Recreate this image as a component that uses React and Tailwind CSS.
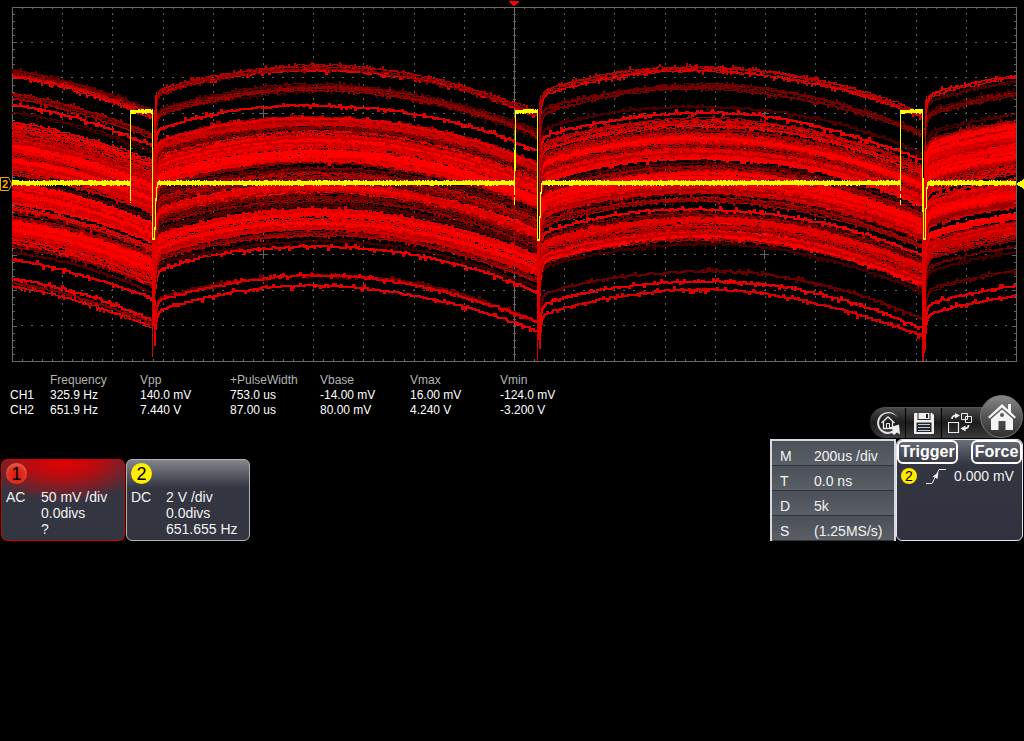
import React from 'react';

// small seeded generator so the persistence trace is the same on every render
function createRandom(seed) {
  let s = seed;
  return () => {
    s = (s * 1664525 + 1013904223) % 4294967296;
    return s / 4294967296;
  };
}

// Each sweep segment: x range, x of the arc's peak, and bands [top, bottom, brightness] at the peak
const SEGMENTS = [
  {
    from: 12, to: 152, peak: -70,
    bands: [
      [63, 66, 110], [67, 69, 190], [70, 71, 235], [87, 92, 125], [99, 99, 235], [105, 106, 75],
      [115, 124, 195], [125, 134, 195], [128, 133, 150], [136, 147, 240], [148, 151, 190], [152, 163, 250], [163, 167, 175],
      [172, 173, 90], [177, 191, 245], [186, 196, 220], [200, 203, 220], [204, 206, 110], [209, 212, 150],
      [214, 219, 245], [219, 221, 230], [222, 228, 225], [228, 237, 195], [238, 240, 130], [246, 246, 80], [253, 253, 225],
      [273, 273, 225], [276, 277, 140], [280, 281, 225],
    ],
  },
  {
    from: 154, to: 537, peak: 315,
    bands: [
      [65, 66, 180], [68, 69, 130], [70, 70, 225], [84, 86, 95], [87, 91, 130], [105, 105, 230],
      [117, 125, 205], [126, 129, 130], [131, 136, 200], [136, 145, 250], [146, 151, 180], [151, 160, 250],
      [161, 163, 140], [167, 171, 110], [173, 181, 170], [184, 192, 220], [194, 197, 120], [199, 200, 150],
      [203, 206, 85], [210, 216, 225], [218, 221, 220], [222, 229, 210], [231, 235, 140], [241, 241, 70],
      [246, 246, 230], [275, 275, 95], [276, 276, 220], [286, 286, 225],
    ],
  },
  {
    from: 539, to: 922, peak: 698,
    bands: [
      [66, 68, 190], [70, 71, 225], [84, 86, 115], [88, 89, 125], [106, 106, 75], [113, 113, 230],
      [118, 126, 190], [129, 135, 195], [136, 142, 250], [143, 149, 180], [150, 158, 250], [162, 163, 85],
      [165, 170, 120], [172, 178, 235], [179, 184, 220], [186, 192, 210], [193, 194, 80], [197, 201, 130],
      [209, 209, 235], [212, 216, 135], [218, 223, 235], [224, 231, 175], [232, 237, 225], [237, 239, 175],
      [244, 244, 70], [271, 271, 110], [281, 281, 225], [290, 290, 225],
    ],
  },
  {
    from: 924, to: 1016, peak: 1085,
    bands: [
      [70, 72, 225], [76, 77, 80], [86, 91, 120], [108, 109, 75], [115, 120, 190], [119, 129, 235],
      [128, 143, 245], [142, 156, 230], [154, 168, 190], [173, 184, 175], [179, 189, 240], [188, 201, 210],
      [209, 213, 235], [216, 219, 150], [219, 228, 225], [229, 235, 190], [241, 242, 120], [248, 248, 70],
      [265, 266, 105], [281, 281, 225], [291, 291, 225],
    ],
  },
];

const arc = (x, peak) => (x - peak) * (x - peak) * 0.00095;

function buildSweeps() {
  const rand = createRandom(7);
  const sweeps = [];
  SEGMENTS.forEach((seg) => {
    seg.bands.forEach(([top, bottom, level]) => {
      const single = bottom === top;
      const wide = bottom - top > 3;
      for (let base = top; base <= bottom; base += 1) {
        const shade = Math.max(60, Math.min(255, Math.round(level + (rand() - 0.55) * (wide ? 110 : 16))));
        const phase = rand() * 6;
        let x = seg.from;
        let d = '';
        while (x < seg.to) {
          // recovery right after the edge, then the slow arc with a little drift
          const settle = seg.from > 12 ? 30 * Math.exp(-(x - seg.from) / 1.4) + 4 * Math.exp(-(x - seg.from) / 5) : 0;
          const drift = Math.sin(x / 40 + phase) * 0.7;
          const y = Math.round(base + arc(x, seg.peak) + settle + drift + (rand() - 0.5) * 1.6);
          const run = x < seg.from + 8 ? 1 : Math.min(1 + Math.floor(rand() * 4), seg.to - x);
          d += d ? `V${y}` : `M${x} ${y}`;
          // noise spike, up or down
          if (run > 1 && rand() < 0.34) {
            const size = (rand() < 0.5 ? -1 : 1) * (rand() < 0.15 ? 3 : 2);
            d += `v${size}h1v${-size}`;
          }
          d += `H${x + run}`;
          x += run;
        }
        sweeps.push({ d, shade, order: rand() + shade / 500, width: single || (wide && level > 200) ? 2 : 1 });
      }
    });
  });
  return sweeps.sort((a, b) => a.order - b.order);
}

function buildBaseline() {
  const rand = createRandom(21);
  let d = '';
  [[12, 130], [158, 514], [542, 900], [928, 1016]].forEach(([from, to]) => {
    for (let x = from; x < to; x++) {
      const top = rand() < 0.4 ? 180 : 181;
      const bottom = rand() < 0.3 ? 186 : 185;
      d += `M${x} ${top}h1V${bottom}h-1z`;
    }
  });
  [[130, 153], [515, 538], [900, 923]].forEach(([from, to]) => {
    for (let x = from; x < to; x++) {
      d += `M${x} ${x < from + 8 || rand() < 0.2 ? 110 : 109}h1V${x < from + 4 || rand() < 0.2 ? 114 : 113}h-1z`;
    }
  });
  return d;
}

function buildGrid() {
  let d = '';
  for (let c = 1; c < 20; c++) {
    if (c === 10) continue;
    const x = Math.round(12 + c * 50.2);
    for (let r = 1; r < 50; r++) d += `M${x} ${Math.round(7 + r * 7.08) - 1}h1v${r % 5 === 0 ? 1 : 2}h-1z`;
  }
  for (let r = 1; r < 10; r++) {
    const y = Math.floor(7 + r * 35.4);
    for (let c = 1; c < 100; c++) d += `M${Math.round(12 + c * 10.04) - 1} ${y}h2v1h-2z`;
  }
  for (let c = 1; c < 100; c++) {
    const x = Math.round(12 + c * 10.04);
    d += `M${x} 8h1v1h-1zM${x} 359h1v2h-1z`;
  }
  for (let r = 1; r < 50; r++) {
    const y = Math.round(7 + r * 7.08);
    const len = r % 5 === 0 ? 4 : 2;
    d += `M13 ${y}h${len}v1h-${len}zM${1016 - len} ${y}h${len}v1h-${len}zM513 ${y}h3v1h-3z`;
  }
  [263, 764].forEach((x) => {
    [113, 254].forEach((y) => {
      d += `M${x - 4} ${y}h9v1h-9zM${x} ${y - 4}h1v9h-1z`;
    });
  });
  return d;
}

const SWEEPS = buildSweeps();
const BASELINE = buildBaseline();
const GRID = buildGrid();

const MEASUREMENTS = {
  columns: ['Frequency', 'Vpp', '+PulseWidth', 'Vbase', 'Vmax', 'Vmin'],
  rows: [
    { name: 'CH1', values: ['325.9 Hz', '140.0 mV', '753.0 us', '-14.00 mV', '16.00 mV', '-124.0 mV'] },
    { name: 'CH2', values: ['651.9 Hz', '7.440 V', '87.00 us', '80.00 mV', '4.240 V', '-3.200 V'] },
  ],
};

const TIMEBASE = [
  ['M', '200us /div'],
  ['T', '0.0 ns'],
  ['D', '5k'],
  ['S', '(1.25MS/s)'],
];

function Waveform() {
  return (
    <svg viewBox="0 0 1024 366" className="block w-full h-auto" shapeRendering="crispEdges" role="img" aria-label="Oscilloscope waveform">
      <path d={GRID} fill="#626262" />
      <path d="M12 7h1005v355h-1005zM13 8v353h1003v-353z" fill="#6a6a6a" fillRule="evenodd" />
      <rect x="514" y="7" width="1" height="354" fill="#6a6a6a" />

      {/* CH1 */}
      <g fill="none">
        {SWEEPS.map((s, i) => (
          <path key={i} d={s.d} stroke={`rgb(${s.shade},0,0)`} strokeWidth={s.width} />
        ))}
      </g>
      <g fill="#dc0000">
        <path d="M152 180h1v177h-1zM153 150h2v176h-2zM155 95h1v80h-1zM154 112h1v90h-1zM156 92h1v30h-1z" />
        <path d="M537 110h1v251h-1zM538 240h1v100h-1zM539 150h1v180h-1z" />
        <path d="M922 200h2v161h-2zM924 150h1v203h-1zM925 100h1v228h-1zM926 96h1v26h-1z" />
      </g>
      <path d="M539 100h1v60h-1zM540 95h1v60h-1zM514 176h1v72h-1z" fill="#b00000" />

      {/* CH2 */}
      <g fill="#ffff00">
        <path d={BASELINE} />
        <path d="M130 111h1v90h-1zM130 202h1v1h-1zM152 110h1v130h-1zM152 238h3v2h-3zM154 227h1v12h-1zM155 198h1v32h-1zM156 187h1v14h-1zM157 182h1v6h-1z" />
        <path d="M515 111h1v60h-1zM514 150h1v45h-1zM514 197h1v8h-1zM537 110h1v130h-1zM537 239h3v2h-3zM539 216h1v24h-1zM540 192h1v26h-1zM541 183h1v11h-1z" />
        <path d="M900 111h1v80h-1zM900 194h1v4h-1zM900 200h1v5h-1zM922 110h1v102h-1zM923 178h1v62h-1zM923 238h3v2h-3zM925 208h1v31h-1zM926 187h1v22h-1zM927 182h1v7h-1z" />
        <path d="M1016 184l8-5v10z" />
      </g>
      <path d="M509 1h10l-5 6z" fill="#ff0000" />

      <g shapeRendering="auto">
        <path d="M.5 177.500h8l3.500 6.500-3.500 6.500h-8z" fill="#000" stroke="#e5b000" />
        <text x="2" y="188" fill="#ffae00" className="font-['Liberation_Sans'] text-[11px] font-bold">2</text>
      </g>
    </svg>
  );
}

function MeasurementTable() {
  return (
    <table className="table-fixed w-[580px] ml-[10px] mt-[7px] text-xs leading-[15px] text-left">
      <thead>
        <tr className="text-[#b4b4b4]">
          <th className="w-10 p-0" aria-label="Channel"></th>
          {MEASUREMENTS.columns.map((c) => (
            <th key={c} className="w-[90px] p-0 font-normal">{c}</th>
          ))}
        </tr>
      </thead>
      <tbody className="text-white">
        {MEASUREMENTS.rows.map((row) => (
          <tr key={row.name}>
            <th className="p-0 font-normal">{row.name}</th>
            {row.values.map((v, i) => (
              <td key={i} className="p-0">{v}</td>
            ))}
          </tr>
        ))}
      </tbody>
    </table>
  );
}

function ChannelCard({ number, coupling, lines, cardClass, badgeClass }) {
  return (
    <section className={`w-[124px] h-[82px] border rounded-md px-1 pt-[3px] ${cardClass}`}>
      <div className={`w-[21px] h-[21px] rounded-full flex items-center justify-center text-lg leading-none text-black ${badgeClass}`}>
        {number}
      </div>
      <div className="flex mt-[5px] text-sm leading-4">
        <span className="w-[35px]">{coupling}</span>
        <div className="whitespace-nowrap">
          {lines.map((l) => (
            <div key={l}>{l}</div>
          ))}
        </div>
      </div>
    </section>
  );
}

function Toolbar() {
  return (
    <nav className="flex items-end justify-end">
      <div className="flex w-[134px] h-[31px] rounded-l-full overflow-hidden bg-gradient-to-b from-[#4a4a4a] via-[#1c1c1c] to-[#3c3c3c] border-t border-[#555]">
        <button aria-label="Reset view" className="w-9 flex items-center justify-center border-r border-black">
          <svg viewBox="0 0 26 26" className="w-[26px] h-[26px]">
            <path d="M22.500 7C19 1 10 0 5 5.500c-4.500 5-3.500 12 1 16 4.500 3.500 10 3.500 14-.5l-1.500-1.500c-3 3-7.500 3-11 .5-4-3-4.500-9-1-13.500C10.500 2 18 2 22.500 7z" fill="#ddd" />
            <path d="M14.500 17.500L24 14.500l1 10-3-2-3 2.500-2.500-2.500 2.500-2z" fill="#eee" />
            <path d="M6.500 13l6.500-6 6.500 6M8.500 12v6.500h9V12" fill="none" stroke="#eee" strokeWidth="1.300" />
            <path d="M11.500 18.500v-5h3v5" fill="none" stroke="#eee" />
          </svg>
        </button>
        <button aria-label="Save" className="w-9 flex items-center justify-center border-r border-black">
          <svg viewBox="0 0 20 21" className="w-5 h-[21px]">
            <path d="M1 0h17l2 2v18a1 1 0 0 1-1 1H1a1 1 0 0 1-1-1V1a1 1 0 0 1 1-1z" fill="#eee" />
            <path d="M3.500 0h13v7h-13zM2.500 9.500h15v9.500h-15z" fill="#262626" />
            <path d="M4.500 0h11v6h-11z" fill="#eee" />
            <path d="M12 1h2v4h-2z" fill="#222" />
            <path d="M4 11.500h12M4 14.500h12M4 17.500h12" stroke="#b8ccdc" />
          </svg>
        </button>
        <button aria-label="Switch window" className="w-9 flex items-center justify-center">
          <svg viewBox="0 0 24 20" className="w-6 h-5" fill="none" stroke="#eee">
            <path d="M.5 9.500h10v10H.5z" strokeWidth="1.200" />
            <path d="M13.500.5h6v6h-6zM17.500 3.500h6v6h-6z" />
            <path d="M4 6c0-3 2-3.500 4-3.500" strokeWidth="1.800" />
            <path d="M7 0l5 2.500-5 3z" fill="#eee" stroke="none" />
            <path d="M20.500 12c0 3-2 3.500-4 3.500" strokeWidth="1.800" />
            <path d="M17.500 12.500l-5 3 5 3z" fill="#eee" stroke="none" />
          </svg>
        </button>
      </div>
      <button aria-label="Home" className="relative w-[43px] h-[43px] -ml-6 rounded-full flex items-center justify-center border border-[#777] bg-gradient-to-b from-[#888] via-[#555] to-[#303030]">
        <svg viewBox="0 0 28 28" className="w-7 h-7" fill="#f4f4f4">
          <path d="M20 1h3v9h-3z" />
          <path d="M0 14L14 1l14 13-1.500 1.500L14 4.500 1.500 15.500z" />
          <path fillRule="evenodd" d="M3 16L14 6.500 25 16v11h-7.500v-9h-7v9H3zM14 10a2 2 0 1 0 0 4 2 2 0 0 0 0-4z" />
        </svg>
      </button>
    </nav>
  );
}

function TriggerPanel() {
  return (
    <section className="w-[127px] h-[102px] rounded-md border border-[#e4e4ea] bg-gradient-to-b from-[#6c6e78] via-[#333541] via-25% to-[#30333f]">
      <div className="flex justify-between">
        <button className="w-[61px] h-6 border-2 border-white rounded-md font-bold text-base leading-5 text-white flex justify-center">Trigger</button>
        <button className="w-[51px] h-6 border-2 border-white rounded-md font-bold text-base leading-5 text-white flex justify-center">Force</button>
      </div>
      <div className="flex items-center mt-1 ml-1 h-4 text-sm">
        <span className="w-4 h-4 rounded-full bg-[#ffe900] text-black leading-none flex items-center justify-center">2</span>
        <svg viewBox="0 0 22 16" className="w-[22px] h-4 ml-2" fill="none" stroke="#eee">
          <path d="M1 15.500h6L14 1.500h7" />
          <path d="M13.500 4.500l-6 4 5 2.500z" fill="#eee" stroke="none" />
        </svg>
        <span className="ml-[7px] whitespace-nowrap">0.000 mV</span>
      </div>
    </section>
  );
}

export default function App() {
  return (
    <main className="min-h-screen bg-black text-[#f2f2f2] font-['Liberation_Sans',Arial,sans-serif]">
      <Waveform />

      <div className="flex items-end justify-between pr-px">
        <div>
          <MeasurementTable />
          <div className="flex gap-px mt-[41px] ml-px">
            <ChannelCard
              number="1"
              coupling="AC"
              lines={['50 mV /div', '0.0divs', '?']}
              cardClass="border-[#d00000] bg-[#333541] bg-[radial-gradient(90px_42px_at_50%_0%,#e60000_0%,#b80c10_40%,#333541_100%)]"
              badgeClass="bg-[radial-gradient(circle_at_50%_60%,#d81808_0%,#e03020_50%,#f09080_100%)]"
            />
            <ChannelCard
              number="2"
              coupling="DC"
              lines={['2 V /div', '0.0divs', '651.655 Hz']}
              cardClass="border-[#b4b4b8] bg-gradient-to-b from-[#85868c] to-[#333541] to-35%"
              badgeClass="bg-[#ffee00]"
            />
          </div>
        </div>

        <div>
          <Toolbar />
          <div className="flex mt-px">
            <dl className="w-[126px] h-[102px] border-2 border-b-0 border-[#d8d8de] text-sm leading-[18px] flex flex-col">
              {TIMEBASE.map(([label, value]) => (
                <div key={label} className="flex flex-1 items-center pt-[6px] pl-2 border-b border-[#30333a] bg-gradient-to-b from-[#4c5058] to-[#5a5e65]">
                  <dt className="w-[34px]">{label}</dt>
                  <dd className="whitespace-nowrap">{value}</dd>
                </div>
              ))}
            </dl>
            <TriggerPanel />
          </div>
        </div>
      </div>
    </main>
  );
}
